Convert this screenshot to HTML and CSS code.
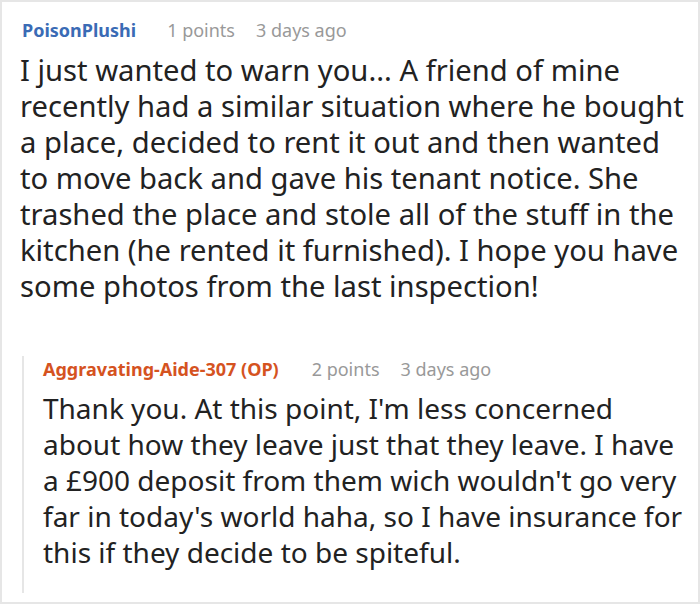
FILE: index.html
```html
<!DOCTYPE html>
<html>
<head>
<meta charset="utf-8">
<link rel="stylesheet" href="styles.css">
</head>
<body>
<div class="frame">
  <div class="comment">
    <div class="meta">
      <span class="user">PoisonPlushi</span>
      <span class="info">1 points</span>
      <span class="info">3 days ago</span>
    </div>
    <p class="body">I just wanted to warn you... A friend of mine recently had a similar situation where he bought a place, decided to rent it out and then wanted to move back and gave his tenant notice. She trashed the place and stole all of the stuff in the kitchen (he rented it furnished). I hope you have some photos from the last inspection!</p>
    <div class="reply">
      <div class="meta">
        <span class="user op">Aggravating-Aide-307 (OP)</span>
        <span class="info">2 points</span>
        <span class="info">3 days ago</span>
      </div>
      <p class="body">Thank you. At this point, I'm less concerned about how they leave just that they leave. I have a £900 deposit from them wich wouldn't go very far in today's world haha, so I have insurance for this if they decide to be spiteful.</p>
    </div>
  </div>
</div>
</body>
</html>
```

FILE: styles.css
```css
html, body {
  margin: 0;
  padding: 0;
  background: #fff;
}
.frame {
  width: 700px;
  height: 604px;
  box-sizing: border-box;
  border: 2px solid #e6e6e6;
  overflow: hidden;
  font-family: "Noto Sans", "Open Sans", sans-serif;
  color: #222;
}
.comment {
  padding: 15px 6px 0 18px;
}
.meta {
  display: flex;
  gap: 21px;
  font-size: 18px;
  line-height: 26px;
  padding-left: 2px;
}
.user {
  font-weight: bold;
  color: #3a6bb5;
  margin-right: 10px;
}
.user.op {
  color: #d5531f;
  margin-right: 12px;
}
.info {
  color: #999;
}
.body {
  margin: 0;
  font-size: 29.2px;
  line-height: 36px;
  padding-top: 9px;
}
.reply {
  margin-top: 62px;
  margin-left: 2px;
  border-left: 2px solid #e6e6e6;
  padding-left: 19px;
  padding-bottom: 23px;
}
.reply .meta {
  margin-top: -10px;
  padding-left: 0;
}
.reply .body {
  font-size: 28px;
  padding-top: 8px;
}
```
